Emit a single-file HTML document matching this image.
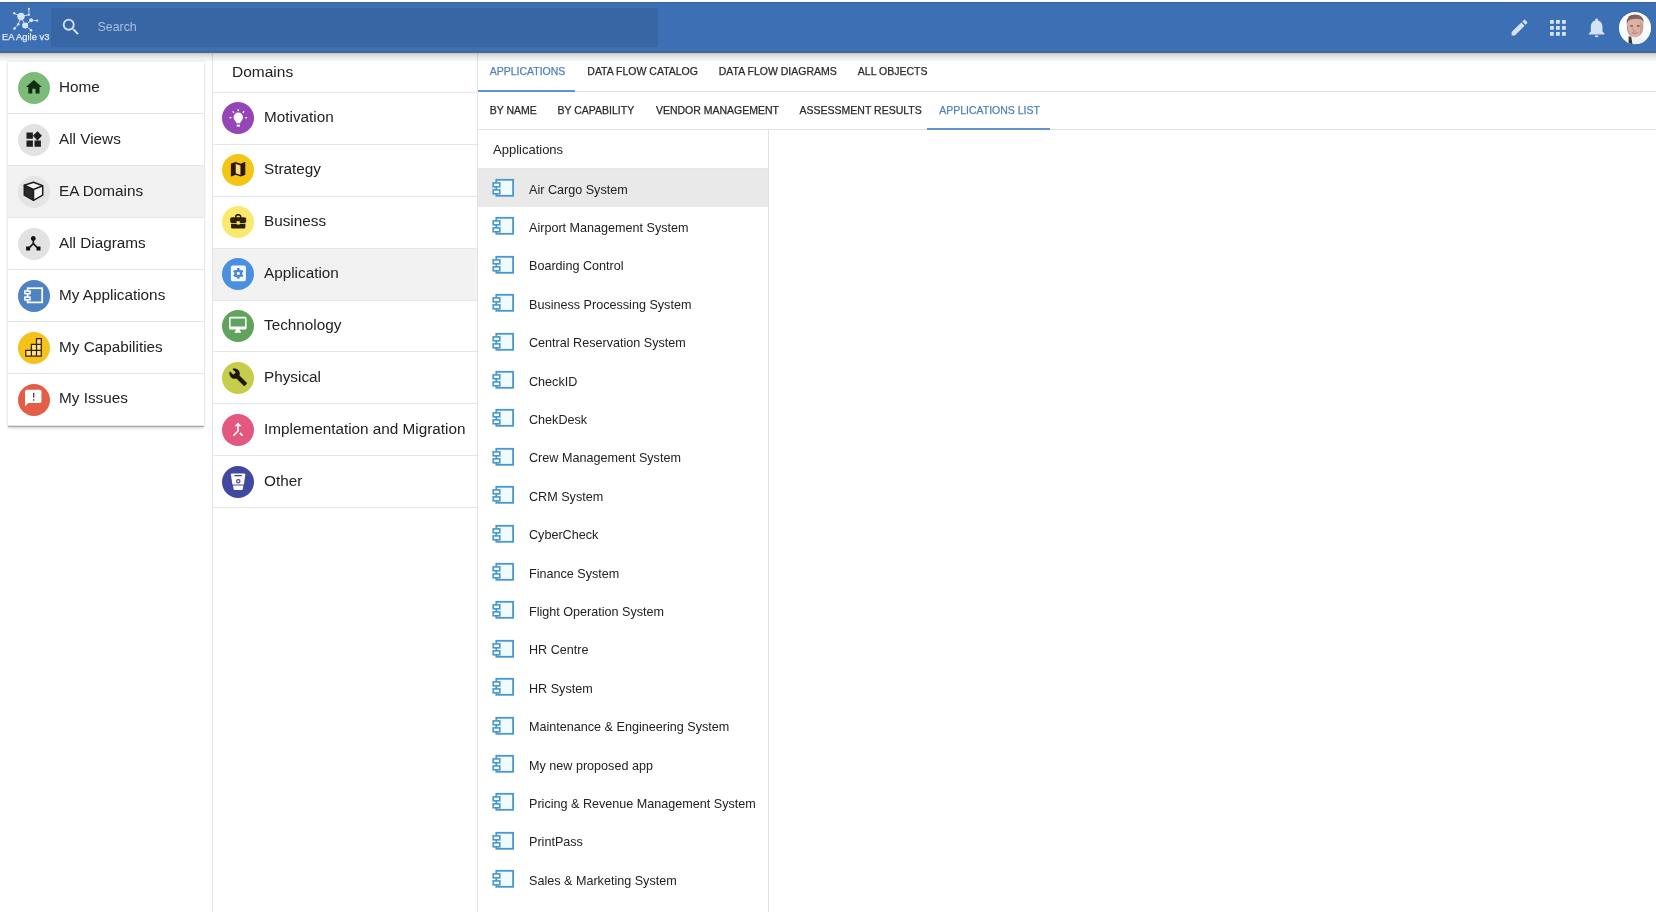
<!DOCTYPE html>
<html><head><meta charset="utf-8">
<style>
*{box-sizing:border-box}
html,body{margin:0;padding:0}
body{-webkit-font-smoothing:antialiased;width:1656px;height:912px;overflow:hidden;background:#fff;font-family:"Liberation Sans",sans-serif;position:relative;color:#222}
.abs{position:absolute}
#wrap{position:absolute;left:0;top:0;width:1656px;height:912px;overflow:hidden;will-change:transform}
svg{display:block}
#hdr{position:absolute;left:0;top:2px;width:1656px;height:51px;background:#3d6fb4;z-index:5}
#hdr:before{content:"";position:absolute;left:0;top:0;right:0;height:1px;background:#3a6099}
#hdr:after{content:"";position:absolute;left:0;bottom:0;right:0;height:2px;background:linear-gradient(#42699e,#4a6790)}
#hshadow{position:absolute;left:0;top:53px;width:1656px;height:9px;z-index:5;background:linear-gradient(rgba(0,0,0,.23),rgba(0,0,0,.13) 2.5px,rgba(0,0,0,.08) 4.5px,rgba(0,0,0,.05) 6.5px,rgba(0,0,0,0))}
#search{position:absolute;left:51px;top:6px;width:607px;height:39px;background:#3865a4;border-radius:2px}
#search .ph{position:absolute;left:46.5px;top:11.5px;font-size:12.4px;color:#a6c0e4}
#logo-t{position:absolute;left:2px;top:29.1px;font-size:9.4px;color:#e3ecf9;white-space:nowrap;-webkit-text-stroke:0.25px #e3ecf9}
/* sidebar */
#side{position:absolute;left:8px;top:62px;width:196px;height:364px;background:#fff;box-shadow:0 1px 0.6px rgba(0,0,0,.24),0 0 2px 0.9px rgba(0,0,0,.075),0 2.5px 2px rgba(0,0,0,.1);z-index:2}
.si{position:absolute;left:0;width:196px;height:52px;border-bottom:1px solid #e6e6e6}
.si.sel{background:#f2f2f2}
.si .ic{position:absolute;left:10px;top:10px;width:32px;height:32px}
.si .lb{position:absolute;left:51px;top:15.5px;font-size:15.3px;color:#222;white-space:nowrap}
/* domains */
#dom{position:absolute;left:212px;top:52px;width:266px;height:860px;border-left:1px solid #e3e3e3;border-right:1px solid #e3e3e3}
#dom .dline{position:absolute;left:0;width:264px;height:1px;background:#e6e6e6}
#dom .hd{position:absolute;left:19px;top:11px;font-size:15.5px;color:#222}
.di{position:absolute;left:0;width:264px;height:51.875px;border-bottom:1px solid #e6e6e6}
.di.sel{background:#f2f2f2}
.di .ic{position:absolute;left:9px;top:9px;width:32px;height:32px}
.di .lb{position:absolute;left:51px;top:15.6px;font-size:15.3px;color:#222;white-space:nowrap}
/* tabs */
.tabrow{position:absolute;left:478px;width:1178px;height:39px;border-bottom:1px solid #e3e3e3}
.tab{position:absolute;top:12px;font-size:10.5px;color:#2a2a2a;white-space:nowrap;letter-spacing:0;-webkit-text-stroke:0.25px #2a2a2a}
.tab.act{color:#5080bd;-webkit-text-stroke:0.25px #5080bd}
.uline{position:absolute;height:2px;background:#6093cf}
/* list */
#list{position:absolute;left:478px;top:130px;width:291px;height:782px;border-right:1px solid #e3e3e3}
#list .hd{position:absolute;left:15px;top:11.5px;font-size:13px;color:#222}
#list .hdline{position:absolute;left:0;top:38px;width:290px;height:1px;background:#e6e6e6}
.li{position:absolute;left:0;width:290px;height:38.4px}
.li.sel{background:#e9e9e9}
.li svg{position:absolute;left:13px;top:9px}
.li .lb{position:absolute;left:51px;top:13.7px;font-size:12.6px;color:#222;white-space:nowrap}
</style></head>
<body><div id="wrap">
<div id="hdr">
  <svg class="abs" style="left:0;top:0" width="50" height="30" viewBox="0 0 50 30">
    <g stroke="#d6e4f7" stroke-width="0.9" fill="none">
      <line x1="14.2" y1="11.3" x2="21" y2="14.5"/><line x1="21" y1="14.5" x2="28.9" y2="12.8"/><line x1="28.9" y1="6.75" x2="28.9" y2="12.8"/>
      <line x1="21" y1="14.5" x2="25.1" y2="23.6"/><line x1="25.1" y1="23.6" x2="31.1" y2="18.3"/><line x1="31.1" y1="18.3" x2="37.1" y2="18.6"/>
      <line x1="21" y1="14.5" x2="18.3" y2="22.2"/><line x1="18.3" y1="22.2" x2="14.5" y2="26.5"/><line x1="25.1" y1="23.6" x2="31.1" y2="28.2"/>
    </g>
    <g fill="#d6e4f7">
      <circle cx="21" cy="14.5" r="3.7"/><circle cx="25.1" cy="23.6" r="3"/><circle cx="31.1" cy="18.3" r="2"/>
      <circle cx="14.2" cy="11.3" r="1.2"/><circle cx="28.9" cy="6.75" r="1.1"/><circle cx="28.9" cy="12.8" r="1.1"/>
      <circle cx="37.1" cy="18.6" r="1.2"/><circle cx="18.3" cy="22.2" r="1.3"/><circle cx="14.5" cy="26.5" r="1.3"/><circle cx="31.1" cy="28.2" r="1.2"/>
    </g>
  </svg>
  <div id="logo-t">EA Agile v3</div>
  <div id="search">
    <svg class="abs" style="left:8.5px;top:8.4px" width="22" height="22" viewBox="0 0 24 24"><path fill="#d4e2f5" d="M15.5 14h-.79l-.28-.27A6.471 6.471 0 0 0 16 9.5 6.5 6.5 0 1 0 9.5 16c1.61 0 3.09-.59 4.23-1.57l.27.28v.79l5 4.99L20.49 19l-4.99-5zm-6 0C7.01 14 5 11.99 5 9.5S7.01 5 9.5 5 14 7.01 14 9.5 11.99 14 9.5 14z"/></svg>
    <div class="ph">Search</div>
  </div>

  <svg class="abs" style="left:1509px;top:15px" width="21" height="21" viewBox="0 0 24 24"><path fill="#d4e2f5" d="M3 17.25V21h3.75L17.81 9.94l-3.75-3.75L3 17.25zM20.71 7.04a.996.996 0 0 0 0-1.41l-2.34-2.34a.996.996 0 0 0-1.41 0l-1.83 1.83 3.75 3.75 1.83-1.83z"/></svg>
  <svg class="abs" style="left:1550px;top:17.8px" width="16" height="16" viewBox="0 0 16 16"><g fill="#d4e2f5"><rect x="0" y="0" width="3.8" height="3.8"/><rect x="6" y="0" width="3.8" height="3.8"/><rect x="12" y="0" width="3.8" height="3.8"/><rect x="0" y="6" width="3.8" height="3.8"/><rect x="6" y="6" width="3.8" height="3.8"/><rect x="12" y="6" width="3.8" height="3.8"/><rect x="0" y="12" width="3.8" height="3.8"/><rect x="6" y="12" width="3.8" height="3.8"/><rect x="12" y="12" width="3.8" height="3.8"/></g></svg>
  <svg class="abs" style="left:1584.7px;top:14.4px" width="23.3" height="23.3" viewBox="0 0 24 24"><path fill="#d4e2f5" d="M12 22c1.1 0 2-.9 2-2h-4c0 1.1.89 2 2 2zm6-6v-5c0-3.07-1.64-5.64-4.5-6.32V4c0-.83-.67-1.5-1.5-1.5s-1.5.67-1.5 1.5v.68C7.63 5.36 6 7.92 6 11v5l-2 2v1h16v-1l-2-2z"/></svg>
  <svg class="abs" style="left:1618px;top:9px" width="34" height="34" viewBox="0 0 34 34">
    <defs><clipPath id="av"><circle cx="17" cy="17" r="16.2"/></clipPath></defs>
    <circle cx="17" cy="17" r="16.6" fill="#35609a"/>
    <circle cx="17" cy="17" r="16.1" fill="#fbfcfd"/>
    <g clip-path="url(#av)">
      <path d="M7 34 Q10 28 14.5 26.5 L20 25.5 Q28 27 32 34 Z" fill="#eef2f7"/>
      <path d="M10.6 25.2 L13.2 25.8 L14.6 34 L10.6 34 Z" fill="#3a3338"/>
      <path d="M8.7 12 Q8.6 4 16.8 3.7 Q25.2 3.8 25.6 11 L25.3 17.5 Q24.8 22.5 20.8 25.3 Q17.3 27 13.8 25.6 Q10 23.6 9.2 18.5 Z" fill="#dcb0a6"/>
      <path d="M8.7 12.5 Q8.4 3.6 16.9 3.4 Q25.6 3.7 25.7 11.3 Q24.3 8.2 21 8 Q17 7.4 12.7 8.4 Q9.9 9.4 8.7 12.5 Z" fill="#7d665b"/>
      <path d="M10 6 Q12 4.2 15.2 4 L12.6 6.6 Z" fill="#9b4a2a" opacity="0.8"/>
      <path d="M9 13 Q10.5 16 10.2 20 Q12 24 14 25.6 Q10 23.6 9.2 18.5 Z" fill="#a77f78" opacity="0.8"/>
      <path d="M21.5 10 Q25.2 12 25.2 17 Q24.8 22 21 25 Q23.2 18 21.5 10 Z" fill="#c99a90" opacity="0.8"/>
      <rect x="12.2" y="14.4" width="2.8" height="1.1" fill="#5a3c38"/><rect x="18.8" y="14.4" width="2.8" height="1.1" fill="#5a3c38"/>
      <path d="M14.8 17 L15.6 20.2 L17.5 20" stroke="#b98479" stroke-width="0.7" fill="none"/>
      <path d="M13.8 21.8 Q16.8 23 19.8 21.8" stroke="#a8665c" stroke-width="0.8" fill="none"/>
    </g>
  </svg>
</div>
<div id="hshadow"></div>
<div id="side"><div class="si" style="top:0px"><div class="ic"><svg width="32" height="32" viewBox="0 0 32 32"><circle cx="16" cy="16" r="16" fill="#7dbb7b"/><path transform="translate(6.3 5.5) scale(0.8)" fill="#0f2e0f" d="M10 20v-6h4v6h5v-8h3L12 3 2 12h3v8z"/></svg></div><div class="lb" style="top:16px">Home</div></div><div class="si" style="top:52px"><div class="ic"><svg width="32" height="32" viewBox="0 0 32 32"><circle cx="16" cy="16" r="16" fill="#e2e2e2"/><path transform="translate(6.1 6.0) scale(0.8)" fill="#1e1e1e" d="M13 13v8h8v-8h-8zM3 21h8v-8H3v8zM3 3v8h8V3H3zm13.66-1.31L11 7.34 16.66 13l5.66-5.66-5.66-5.65z"/></svg></div><div class="lb" style="top:16px">All Views</div></div><div class="si sel" style="top:104px"><div class="ic"><svg width="32" height="32" viewBox="0 0 32 32"><circle cx="16" cy="16" r="16" fill="#e4e4e4"/><path d="M6.3 9.2 L15.5 13.5 L15.5 24.3 L6.3 19.2 Z" fill="#2a2a2a" stroke="#1e1e1e" stroke-width="1.5" stroke-linejoin="round"/><path d="M15.5 6.3 L24.7 9.8 L15.5 13.5 L6.3 9.2 Z M15.5 13.5 L24.7 9.8 L24.7 19.2 L15.5 24.3 Z" fill="#f6f6f6" stroke="#1e1e1e" stroke-width="1.5" stroke-linejoin="round"/></svg></div><div class="lb" style="top:16px">EA Domains</div></div><div class="si" style="top:156px"><div class="ic"><svg width="32" height="32" viewBox="0 0 32 32"><circle cx="16" cy="16" r="16" fill="#e2e2e2"/><path transform="translate(5.7 5.7) scale(0.8)" fill="#111" d="M17 16l-4-4V8.82C14.16 8.4 15 7.3 15 6c0-1.66-1.34-3-3-3S9 4.34 9 6c0 1.3.84 2.4 2 2.82V12l-4 4H3v5h5v-3.05l4-4.2 4 4.2V21h5v-5h-4z"/></svg></div><div class="lb" style="top:16px">All Diagrams</div></div><div class="si" style="top:208px"><div class="ic"><svg width="32" height="32" viewBox="0 0 32 32"><circle cx="16" cy="16" r="16" fill="#4f82c2"/><rect x="9.6" y="8.2" width="14.6" height="14.2" fill="none" stroke="#fff" stroke-width="1.7"/><g fill="#4f82c2" stroke="#fff" stroke-width="1.5"><rect x="6.85" y="10.95" width="5.2" height="2.7"/><rect x="6.85" y="17.1" width="5.2" height="2.8"/></g></svg></div><div class="lb" style="top:16px">My Applications</div></div><div class="si" style="top:260px"><div class="ic"><svg width="32" height="32" viewBox="0 0 32 32"><circle cx="16" cy="16" r="16" fill="#f5c21b"/><g fill="#ffe28a"><rect x="7.8" y="18.3" width="15.5" height="5.8"/><rect x="13.4" y="12.4" width="9.9" height="5.9"/><rect x="18.5" y="6.6" width="4.8" height="5.8"/></g><g fill="none" stroke="#3a2200" stroke-width="1.25"><path d="M7.8 24.1 H23.3 V6.6 H18.5 V12.4 H13.4 V18.3 H7.8 Z"/><path d="M13.4 18.3 H23.3 M18.5 12.4 H23.3 M13.4 18.3 V24.1 M18.5 12.4 V24.1"/></g></svg></div><div class="lb" style="top:16px">My Capabilities</div></div><div class="si" style="top:312px"><div class="ic"><svg width="32" height="32" viewBox="0 0 32 32"><circle cx="16" cy="16" r="16" fill="#e45d47"/><path transform="translate(5.4 4.2) scale(0.82)" fill="#fff" d="M20 2H4c-1.1 0-1.99.9-1.99 2L2 22l4-4h14c1.1 0 2-.9 2-2V4c0-1.1-.9-2-2-2z"/><rect x="15.1" y="8.8" width="1.25" height="4.9" fill="#3a3a3a"/><rect x="15.1" y="15.2" width="1.25" height="1.5" fill="#3a3a3a"/></svg></div><div class="lb" style="top:15px">My Issues</div></div></div>
<div id="dom"><div class="hd">Domains</div><div class="dline" style="top:40px"></div><div class="di" style="top:41.000px"><div class="ic" style="top:9.000px"><svg width="32" height="32" viewBox="0 0 32 32"><circle cx="16" cy="16" r="16" fill="#9545b6"/><g fill="#fff"><circle cx="16.3" cy="15.3" r="4.7"/><path d="M12.6 17.6 L14.6 21.2 H18 L20 17.6 Z"/><rect x="14.7" y="22.6" width="3.2" height="2"/><rect x="15.6" y="7.2" width="1.4" height="2"/><path d="M10.2 9.7 l1.1 -0.8 1.2 1.6 -1.1 0.8z M22.6 9.6 l-1.1 -0.8 -1.2 1.6 1.1 0.8z"/><rect x="7.5" y="15" width="1.9" height="1.3"/><rect x="23.2" y="15.1" width="1.9" height="1.3"/></g></svg></div><div class="lb" style="top:15.000px">Motivation</div></div><div class="di" style="top:92.875px"><div class="ic" style="top:9.125px"><svg width="32" height="32" viewBox="0 0 32 32"><circle cx="16" cy="16" r="16" fill="#f5c516"/><path d="M13.7 10 L18.5 11.6 V22 L13.7 20.4 Z" fill="#f9dc8c"/><path transform="translate(6.5 5.7) scale(0.8)" fill="#2b1600" d="M20.5 3l-.16.03L15 5.1 9 3 3.36 4.9c-.21.07-.36.25-.36.48V20.5c0 .28.22.5.5.5l.16-.03L9 18.9l6 2.1 5.64-1.9c.21-.07.36-.25.36-.48V3.5c0-.28-.22-.5-.5-.5zM15 19l-6-2.11V5l6 2.11V19z"/></svg></div><div class="lb" style="top:15.125px">Strategy</div></div><div class="di" style="top:144.750px"><div class="ic" style="top:9.250px"><svg width="32" height="32" viewBox="0 0 32 32"><circle cx="16" cy="16" r="16" fill="#fbe96f"/><path transform="translate(6.6 5.7) scale(0.8)" fill="#2e2100" d="M10 16v-1H3.01L3 19c0 1.11.89 2 2 2h14c1.11 0 2-.89 2-2v-4h-7v1h-4zm10-9h-4.01V5l-2-2h-4l-2 2v2H4c-1.1 0-2 .9-2 2v3c0 1.11.89 2 2 2h6v-2h4v2h6c1.1 0 2-.9 2-2V9c0-1.1-.9-2-2-2zm-6 0h-4V5h4v2z"/></svg></div><div class="lb" style="top:15.250px">Business</div></div><div class="di sel" style="top:196.625px"><div class="ic" style="top:9.375px"><svg width="32" height="32" viewBox="0 0 32 32"><circle cx="16" cy="16" r="16" fill="#4a8fe0"/><rect x="8.9" y="7.6" width="15" height="15.6" rx="1.6" fill="#f4fbff"/><g transform="translate(16.3 15.4)" fill="#4a86d8"><circle r="3.9"/><rect x="-1.15" y="-5.3" width="2.3" height="3" rx="0.3" transform="rotate(0)"/><rect x="-1.15" y="-5.3" width="2.3" height="3" rx="0.3" transform="rotate(60)"/><rect x="-1.15" y="-5.3" width="2.3" height="3" rx="0.3" transform="rotate(120)"/><rect x="-1.15" y="-5.3" width="2.3" height="3" rx="0.3" transform="rotate(180)"/><rect x="-1.15" y="-5.3" width="2.3" height="3" rx="0.3" transform="rotate(240)"/><rect x="-1.15" y="-5.3" width="2.3" height="3" rx="0.3" transform="rotate(300)"/></g><circle cx="16.3" cy="15.4" r="1.6" fill="#f4fbff"/></svg></div><div class="lb" style="top:15.375px">Application</div></div><div class="di" style="top:248.500px"><div class="ic" style="top:9.500px"><svg width="32" height="32" viewBox="0 0 32 32"><circle cx="16" cy="16" r="16" fill="#5fa35d"/><path transform="translate(6.2 5.2) scale(0.8)" fill="#fff" d="M21 2H3c-1.1 0-2 .9-2 2v12c0 1.1.9 2 2 2h7l-2 3v1h8v-1l-2-3h7c1.1 0 2-.9 2-2V4c0-1.1-.9-2-2-2zm0 12H3V4h18v10z"/></svg></div><div class="lb" style="top:15.500px">Technology</div></div><div class="di" style="top:300.375px"><div class="ic" style="top:9.625px"><svg width="32" height="32" viewBox="0 0 32 32"><circle cx="16" cy="16" r="16" fill="#c6cd4b"/><path transform="translate(6.6 5.6) scale(0.8)" fill="#1f1600" d="M22.7 19l-9.1-9.1c.9-2.3.4-5-1.5-6.9-2-2-5-2.4-7.4-1.3L9 6 6 9 1.6 4.7C.4 7.1.9 10.1 2.9 12.1c1.9 1.9 4.6 2.4 6.9 1.5l9.1 9.1c.4.4 1 .4 1.4 0l2.3-2.3c.5-.4.5-1.1.1-1.4z"/></svg></div><div class="lb" style="top:15.625px">Physical</div></div><div class="di" style="top:352.250px"><div class="ic" style="top:9.750px"><svg width="32" height="32" viewBox="0 0 32 32"><circle cx="16" cy="16" r="16" fill="#e4577f"/><path transform="translate(6.4 5.8) scale(0.8)" fill="#fff" d="M17 20.41L18.41 19 15 15.59 13.59 17 17 20.41zM7.5 8H11v5.59L5.59 19 7 20.41l6-6V8h3.5L12 3.5 7.5 8z"/></svg></div><div class="lb" style="top:15.750px">Implementation and Migration</div></div><div class="di" style="top:404.125px"><div class="ic" style="top:9.875px"><svg width="32" height="32" viewBox="0 0 32 32"><circle cx="16" cy="16" r="16" fill="#41489e"/><path fill="#fff" d="M8.9 8.6 Q8.9 7.4 10.2 7.4 H22 Q23.3 7.4 23.3 8.6 L21.9 18.6 H10.4 Z"/><path fill="#fff" d="M11 19.6 H21.4 L20.8 23 Q20.6 23.9 19.7 23.9 H12.7 Q11.8 23.9 11.6 23 Z"/><rect x="12.3" y="9.1" width="7.7" height="1.2" rx="0.6" fill="#3b3f8f"/><circle cx="16.3" cy="15.3" r="1.7" fill="none" stroke="#3b3f8f" stroke-width="1.1"/></svg></div><div class="lb" style="top:15.875px">Other</div></div></div>
<div class="tabrow" style="top:52px;height:40px"></div><div class="tabrow" style="top:92px;height:38px"></div><div class="tab act" style="left:489.7px;top:65px">APPLICATIONS</div><div class="tab" style="left:587.3px;top:65px">DATA FLOW CATALOG</div><div class="tab" style="left:718.7px;top:65px">DATA FLOW DIAGRAMS</div><div class="tab" style="left:857.8px;top:65px">ALL OBJECTS</div><div class="tab" style="left:489.7px;top:104px">BY NAME</div><div class="tab" style="left:557.5px;top:104px">BY CAPABILITY</div><div class="tab" style="left:655.9px;top:104px">VENDOR MANAGEMENT</div><div class="tab" style="left:799.6px;top:104px">ASSESSMENT RESULTS</div><div class="tab act" style="left:939.2px;top:104px">APPLICATIONS LIST</div><div class="uline" style="left:478px;top:90px;width:97px"></div><div class="uline" style="left:927px;top:128px;width:123px"></div>
<div id="list"><div class="hd">Applications</div><div class="hdline"></div><div class="li sel" style="top:39.0px"><svg width="24" height="20" viewBox="0 0 24 20"><rect x="5.3" y="1.8" width="16.8" height="16" fill="#f0fbff" stroke="#4b97c9" stroke-width="1.8"/><g fill="#f0fbff" stroke="#4b97c9" stroke-width="1.6"><rect x="2.2" y="4.9" width="6.6" height="3.9"/><rect x="2.2" y="11.9" width="6.6" height="3.9"/></g></svg><div class="lb">Air Cargo System</div></div><div class="li" style="top:77.4px"><svg width="24" height="20" viewBox="0 0 24 20"><rect x="5.3" y="1.8" width="16.8" height="16" fill="#f0fbff" stroke="#4b97c9" stroke-width="1.8"/><g fill="#f0fbff" stroke="#4b97c9" stroke-width="1.6"><rect x="2.2" y="4.9" width="6.6" height="3.9"/><rect x="2.2" y="11.9" width="6.6" height="3.9"/></g></svg><div class="lb">Airport Management System</div></div><div class="li" style="top:115.8px"><svg width="24" height="20" viewBox="0 0 24 20"><rect x="5.3" y="1.8" width="16.8" height="16" fill="#f0fbff" stroke="#4b97c9" stroke-width="1.8"/><g fill="#f0fbff" stroke="#4b97c9" stroke-width="1.6"><rect x="2.2" y="4.9" width="6.6" height="3.9"/><rect x="2.2" y="11.9" width="6.6" height="3.9"/></g></svg><div class="lb">Boarding Control</div></div><div class="li" style="top:154.2px"><svg width="24" height="20" viewBox="0 0 24 20"><rect x="5.3" y="1.8" width="16.8" height="16" fill="#f0fbff" stroke="#4b97c9" stroke-width="1.8"/><g fill="#f0fbff" stroke="#4b97c9" stroke-width="1.6"><rect x="2.2" y="4.9" width="6.6" height="3.9"/><rect x="2.2" y="11.9" width="6.6" height="3.9"/></g></svg><div class="lb">Business Processing System</div></div><div class="li" style="top:192.6px"><svg width="24" height="20" viewBox="0 0 24 20"><rect x="5.3" y="1.8" width="16.8" height="16" fill="#f0fbff" stroke="#4b97c9" stroke-width="1.8"/><g fill="#f0fbff" stroke="#4b97c9" stroke-width="1.6"><rect x="2.2" y="4.9" width="6.6" height="3.9"/><rect x="2.2" y="11.9" width="6.6" height="3.9"/></g></svg><div class="lb">Central Reservation System</div></div><div class="li" style="top:231.0px"><svg width="24" height="20" viewBox="0 0 24 20"><rect x="5.3" y="1.8" width="16.8" height="16" fill="#f0fbff" stroke="#4b97c9" stroke-width="1.8"/><g fill="#f0fbff" stroke="#4b97c9" stroke-width="1.6"><rect x="2.2" y="4.9" width="6.6" height="3.9"/><rect x="2.2" y="11.9" width="6.6" height="3.9"/></g></svg><div class="lb">CheckID</div></div><div class="li" style="top:269.4px"><svg width="24" height="20" viewBox="0 0 24 20"><rect x="5.3" y="1.8" width="16.8" height="16" fill="#f0fbff" stroke="#4b97c9" stroke-width="1.8"/><g fill="#f0fbff" stroke="#4b97c9" stroke-width="1.6"><rect x="2.2" y="4.9" width="6.6" height="3.9"/><rect x="2.2" y="11.9" width="6.6" height="3.9"/></g></svg><div class="lb">ChekDesk</div></div><div class="li" style="top:307.8px"><svg width="24" height="20" viewBox="0 0 24 20"><rect x="5.3" y="1.8" width="16.8" height="16" fill="#f0fbff" stroke="#4b97c9" stroke-width="1.8"/><g fill="#f0fbff" stroke="#4b97c9" stroke-width="1.6"><rect x="2.2" y="4.9" width="6.6" height="3.9"/><rect x="2.2" y="11.9" width="6.6" height="3.9"/></g></svg><div class="lb">Crew Management System</div></div><div class="li" style="top:346.2px"><svg width="24" height="20" viewBox="0 0 24 20"><rect x="5.3" y="1.8" width="16.8" height="16" fill="#f0fbff" stroke="#4b97c9" stroke-width="1.8"/><g fill="#f0fbff" stroke="#4b97c9" stroke-width="1.6"><rect x="2.2" y="4.9" width="6.6" height="3.9"/><rect x="2.2" y="11.9" width="6.6" height="3.9"/></g></svg><div class="lb">CRM System</div></div><div class="li" style="top:384.6px"><svg width="24" height="20" viewBox="0 0 24 20"><rect x="5.3" y="1.8" width="16.8" height="16" fill="#f0fbff" stroke="#4b97c9" stroke-width="1.8"/><g fill="#f0fbff" stroke="#4b97c9" stroke-width="1.6"><rect x="2.2" y="4.9" width="6.6" height="3.9"/><rect x="2.2" y="11.9" width="6.6" height="3.9"/></g></svg><div class="lb">CyberCheck</div></div><div class="li" style="top:423.0px"><svg width="24" height="20" viewBox="0 0 24 20"><rect x="5.3" y="1.8" width="16.8" height="16" fill="#f0fbff" stroke="#4b97c9" stroke-width="1.8"/><g fill="#f0fbff" stroke="#4b97c9" stroke-width="1.6"><rect x="2.2" y="4.9" width="6.6" height="3.9"/><rect x="2.2" y="11.9" width="6.6" height="3.9"/></g></svg><div class="lb">Finance System</div></div><div class="li" style="top:461.4px"><svg width="24" height="20" viewBox="0 0 24 20"><rect x="5.3" y="1.8" width="16.8" height="16" fill="#f0fbff" stroke="#4b97c9" stroke-width="1.8"/><g fill="#f0fbff" stroke="#4b97c9" stroke-width="1.6"><rect x="2.2" y="4.9" width="6.6" height="3.9"/><rect x="2.2" y="11.9" width="6.6" height="3.9"/></g></svg><div class="lb">Flight Operation System</div></div><div class="li" style="top:499.8px"><svg width="24" height="20" viewBox="0 0 24 20"><rect x="5.3" y="1.8" width="16.8" height="16" fill="#f0fbff" stroke="#4b97c9" stroke-width="1.8"/><g fill="#f0fbff" stroke="#4b97c9" stroke-width="1.6"><rect x="2.2" y="4.9" width="6.6" height="3.9"/><rect x="2.2" y="11.9" width="6.6" height="3.9"/></g></svg><div class="lb">HR Centre</div></div><div class="li" style="top:538.2px"><svg width="24" height="20" viewBox="0 0 24 20"><rect x="5.3" y="1.8" width="16.8" height="16" fill="#f0fbff" stroke="#4b97c9" stroke-width="1.8"/><g fill="#f0fbff" stroke="#4b97c9" stroke-width="1.6"><rect x="2.2" y="4.9" width="6.6" height="3.9"/><rect x="2.2" y="11.9" width="6.6" height="3.9"/></g></svg><div class="lb">HR System</div></div><div class="li" style="top:576.6px"><svg width="24" height="20" viewBox="0 0 24 20"><rect x="5.3" y="1.8" width="16.8" height="16" fill="#f0fbff" stroke="#4b97c9" stroke-width="1.8"/><g fill="#f0fbff" stroke="#4b97c9" stroke-width="1.6"><rect x="2.2" y="4.9" width="6.6" height="3.9"/><rect x="2.2" y="11.9" width="6.6" height="3.9"/></g></svg><div class="lb">Maintenance &amp; Engineering System</div></div><div class="li" style="top:615.0px"><svg width="24" height="20" viewBox="0 0 24 20"><rect x="5.3" y="1.8" width="16.8" height="16" fill="#f0fbff" stroke="#4b97c9" stroke-width="1.8"/><g fill="#f0fbff" stroke="#4b97c9" stroke-width="1.6"><rect x="2.2" y="4.9" width="6.6" height="3.9"/><rect x="2.2" y="11.9" width="6.6" height="3.9"/></g></svg><div class="lb">My new proposed app</div></div><div class="li" style="top:653.4px"><svg width="24" height="20" viewBox="0 0 24 20"><rect x="5.3" y="1.8" width="16.8" height="16" fill="#f0fbff" stroke="#4b97c9" stroke-width="1.8"/><g fill="#f0fbff" stroke="#4b97c9" stroke-width="1.6"><rect x="2.2" y="4.9" width="6.6" height="3.9"/><rect x="2.2" y="11.9" width="6.6" height="3.9"/></g></svg><div class="lb">Pricing &amp; Revenue Management System</div></div><div class="li" style="top:691.8px"><svg width="24" height="20" viewBox="0 0 24 20"><rect x="5.3" y="1.8" width="16.8" height="16" fill="#f0fbff" stroke="#4b97c9" stroke-width="1.8"/><g fill="#f0fbff" stroke="#4b97c9" stroke-width="1.6"><rect x="2.2" y="4.9" width="6.6" height="3.9"/><rect x="2.2" y="11.9" width="6.6" height="3.9"/></g></svg><div class="lb">PrintPass</div></div><div class="li" style="top:730.2px"><svg width="24" height="20" viewBox="0 0 24 20"><rect x="5.3" y="1.8" width="16.8" height="16" fill="#f0fbff" stroke="#4b97c9" stroke-width="1.8"/><g fill="#f0fbff" stroke="#4b97c9" stroke-width="1.6"><rect x="2.2" y="4.9" width="6.6" height="3.9"/><rect x="2.2" y="11.9" width="6.6" height="3.9"/></g></svg><div class="lb">Sales &amp; Marketing System</div></div></div>
</div></body></html>
